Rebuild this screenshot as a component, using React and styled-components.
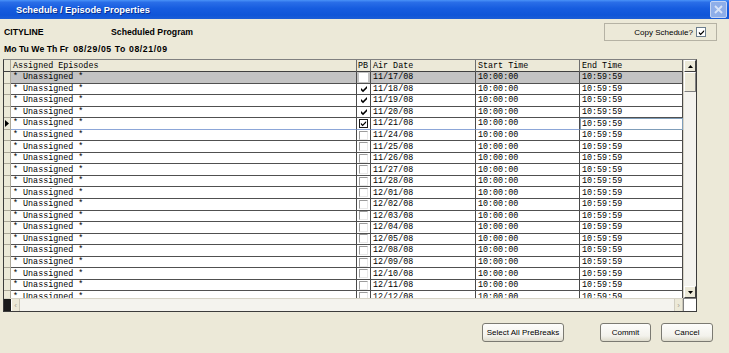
import React from 'react';
import styled, { createGlobalStyle, css } from 'styled-components';

const GlobalStyle = createGlobalStyle`
  html, body {
    margin: 0;
    padding: 0;
    background: #ece9d8;
  }
  body {
    font-family: "Liberation Sans", Arial, sans-serif;
  }
`;

const ROW_H = 11.56;

const Window = styled.div`
  width: 729px;
  height: 353px;
  background: #ece9d8;
  display: flex;
  flex-direction: column;
  overflow: hidden;
`;

const TitleBar = styled.div`
  height: 19px;
  display: flex;
  align-items: center;
  justify-content: space-between;
  padding: 0 2px 0 16px;
  background: linear-gradient(#4a93f8 0%, #2a6ee8 12%, #165cdf 45%, #0f55d8 80%, #1c5ed6 100%);
`;

const Title = styled.span`
  color: #fff;
  font-family: "Liberation Sans", Arial, sans-serif;
  font-weight: bold;
  font-size: 9.3px;
  text-shadow: 1px 1px 0 #0a2f8c;
`;

const CloseButton = styled.div`
  width: 15px;
  height: 15px;
  border-radius: 2px;
  border: 1px solid #c4d4f4;
  background: #8eaee9;
  display: flex;
  align-items: center;
  justify-content: center;
`;

const Body = styled.div`
  flex: 1;
  display: flex;
  flex-direction: column;
  padding: 4px 0 0 3px;
`;

const InfoGrid = styled.div`
  display: grid;
  grid-template-columns: 107px 1fr auto;
  grid-template-rows: 18px 15px;
  align-items: center;
  padding-left: 1px;
  padding-right: 12px;
`;

const Label = styled.div`
  font-family: "Liberation Sans", Arial, sans-serif;
  font-weight: bold;
  font-size: 8.7px;
  color: #000;
  white-space: pre;
  ${p => p.$span && css`grid-column: 1 / span 3;`}
`;

const Range = styled.span`
  letter-spacing: 0.6px;
`;

const CopyButton = styled.div`
  width: 101px;
  height: 16px;
  border: 1px solid #b5b2a4;
  display: flex;
  align-items: center;
  justify-content: flex-end;
  gap: 3px;
  padding-right: 10px;
  box-sizing: content-box;
  font-size: 8px;
  color: #000;
`;

const SmallCheck = styled.span`
  width: 8px;
  height: 8px;
  border: 1px solid #6b7d8c;
  background: #fff;
  display: inline-flex;
  align-items: center;
  justify-content: center;
`;

const Frame = styled.div`
  margin-top: 3px;
  width: 692px;
  height: 251px;
  border: 1px solid #3c3c3c;
  border-top-color: #808080;
  display: grid;
  grid-template-columns: 679px 13px;
  grid-template-rows: 238px 13px;
  background: #ffffff;
`;

const DataArea = styled.div`
  overflow: hidden;
  font-family: "Liberation Mono", "Courier New", monospace;
  font-size: 8.4px;
  color: #000;
`;

const COLS = '7px 346px 14px 105px 104px 103px';

const HeaderRow = styled.div`
  display: grid;
  grid-template-columns: ${COLS};
  height: 12px;
  background: #ece9d8;
`;

const HeaderCell = styled.div`
  border-right: 1px solid ${p => (p.$gutter ? '#aca899' : '#6e6e6e')};
  border-bottom: 1px solid #404040;
  padding-left: ${p => (p.$tight ? 1 : 2)}px;
  display: flex;
  align-items: center;
  overflow: hidden;
  white-space: pre;
`;

const Row = styled.div`
  display: grid;
  grid-template-columns: ${COLS};
  height: ${ROW_H}px;
  background: ${p => (p.$selected ? '#c3c3c3' : '#fff')};
`;

const Cell = styled.div`
  border-right: 1px solid #4a4a4a;
  border-bottom: 1px solid ${p => (p.$current ? '#8ca6d8' : '#505050')};
  padding-left: 2px;
  display: flex;
  align-items: center;
  overflow: hidden;
  white-space: pre;
  box-sizing: border-box;
  ${p => p.$focus && css`
    border: 1px solid #7f9db9;
    padding-left: 1px;
  `}
`;

const Gutter = styled.div`
  background: #ece9d8;
  border-right: 1px solid #aca899;
  border-bottom: 1px solid #aca899;
  display: flex;
  align-items: center;
  justify-content: flex-start;
  padding-left: 1px;
`;

const PBCell = styled(Cell)`
  justify-content: center;
  padding: 0;
`;

const Box = styled.span`
  width: 9px;
  height: 9px;
  box-sizing: border-box;
  display: inline-flex;
  align-items: center;
  justify-content: center;
  background: #fff;
  ${p => p.$variant === 'plain' && css`
    border-top: 1px solid #9c9c9c;
    border-left: 1px solid #9c9c9c;
    border-right: 1px solid #e8e8e8;
    border-bottom: 1px solid #e8e8e8;
  `}
  ${p => p.$variant === 'focus' && css`
    border: 1px solid #1a1a1a;
  `}
`;

const VScroll = styled.div`
  background: #f4f3ee;
  border-left: 1px solid #d6d3c6;
  display: flex;
  flex-direction: column;
  justify-content: space-between;
`;

const ArrowButton = styled.div`
  width: 12px;
  height: 12px;
  box-sizing: border-box;
  background: #ece9d8;
  border-top: 1px solid #fff;
  border-left: 1px solid #fff;
  border-right: 1px solid #404040;
  border-bottom: 1px solid #404040;
  display: flex;
  align-items: center;
  justify-content: center;
`;

const Thumb = styled.div`
  width: 12px;
  height: 20px;
  box-sizing: border-box;
  background: #ece9d8;
  border-top: 1px solid #fff;
  border-left: 1px solid #fff;
  border-right: 1px solid #808080;
  border-bottom: 1px solid #808080;
`;

const Track = styled.div`
  flex: 1;
`;

const HScroll = styled.div`
  display: flex;
  align-items: stretch;
  background: #f4f3ee;
  border-top: 1px solid #d6d3c6;
`;

const HScrollCap = styled.div`
  width: 7px;
  background: #1a1a1a;
`;

const HArrow = styled.div`
  width: 9px;
  box-sizing: border-box;
  background: #ece9d8;
  border-right: 1px solid #c9c6b8;
  border-left: 1px solid #fff;
  display: flex;
  align-items: center;
  justify-content: center;
  color: #a5a294;
  font-size: 8px;
  ${p => p.$right && css`
    margin-left: auto;
    border-left: 1px solid #d0cdc0;
  `}
`;

const Corner = styled.div`
  background: #fff;
  border-left: 1px solid #808080;
  border-top: 1px solid #808080;
`;

const Footer = styled.div`
  display: flex;
  align-items: center;
  padding: 11px 16px 0 0;
`;

const Button = styled.button`
  height: 19px;
  width: ${p => p.$width}px;
  margin-left: ${p => p.$gap}px;
  border: 1px solid #7b7a72;
  border-radius: 3px;
  background: linear-gradient(#fdfdfb 0%, #f3f2ec 70%, #dedbcc 100%);
  font-family: "Liberation Sans", Arial, sans-serif;
  font-size: 8px;
  color: #000;
  padding: 0;
  &:first-child {
    margin-left: auto;
  }
`;

const Check = ({ size = 8 }) => (
  <svg width={size} height={size} viewBox="0 0 8 8">
    <path d="M1 3 L3 5 L7 1 L7 3.2 L3 7.2 L1 5.2 Z" fill="#000" />
  </svg>
);

const dates = [
  '11/17/08', '11/18/08', '11/19/08', '11/20/08', '11/21/08', '11/24/08',
  '11/25/08', '11/26/08', '11/27/08', '11/28/08', '12/01/08', '12/02/08',
  '12/03/08', '12/04/08', '12/05/08', '12/08/08', '12/09/08', '12/10/08',
  '12/11/08', '12/12/08',
];

const PB = ({ index }) => {
  if (index === 0) return <Box />;
  if (index === 4) return <Box $variant="focus"><Check size={7} /></Box>;
  if (index < 4) return <Box><Check size={8} /></Box>;
  return <Box $variant="plain" />;
};

const App = () => {
  return (
    <Window>
      <GlobalStyle />
      <TitleBar>
        <Title>Schedule / Episode Properties</Title>
        <CloseButton>
          <svg width="9" height="9" viewBox="0 0 9 9">
            <path d="M1 1 L8 8 M8 1 L1 8" stroke="#d7e3f8" strokeWidth="1.8" />
          </svg>
        </CloseButton>
      </TitleBar>
      <Body>
        <InfoGrid>
          <Label>CITYLINE</Label>
          <Label>Scheduled Program</Label>
          <CopyButton>
            Copy Schedule?
            <SmallCheck><Check size={7} /></SmallCheck>
          </CopyButton>
          <Label $span>
            {'Mo Tu We Th Fr  '}
            <Range>08/29/05 To 08/21/09</Range>
          </Label>
        </InfoGrid>

        <Frame>
          <DataArea>
            <HeaderRow>
              <HeaderCell $gutter />
              <HeaderCell>Assigned Episodes</HeaderCell>
              <HeaderCell $tight>PB</HeaderCell>
              <HeaderCell>Air Date</HeaderCell>
              <HeaderCell>Start Time</HeaderCell>
              <HeaderCell>End Time</HeaderCell>
            </HeaderRow>
            {dates.map((date, i) => {
              const current = i === 4;
              return (
                <Row key={date} $selected={i === 0}>
                  <Gutter>
                    {current && (
                      <svg width="4" height="7" viewBox="0 0 4 7">
                        <path d="M0 0 L4 3.5 L0 7 Z" fill="#000" />
                      </svg>
                    )}
                  </Gutter>
                  <Cell $current={current}>* Unassigned *</Cell>
                  <PBCell $current={current}><PB index={i} /></PBCell>
                  <Cell $current={current}>{date}</Cell>
                  <Cell $current={current}>10:00:00</Cell>
                  <Cell $current={current} $focus={current}>10:59:59</Cell>
                </Row>
              );
            })}
          </DataArea>
          <VScroll>
            <div>
              <ArrowButton>
                <svg width="5" height="3" viewBox="0 0 5 3">
                  <path d="M0 3 L2.5 0 L5 3 Z" fill="#000" />
                </svg>
              </ArrowButton>
              <Thumb />
            </div>
            <Track />
            <ArrowButton>
              <svg width="5" height="3" viewBox="0 0 5 3">
                <path d="M0 0 L2.5 3 L5 0 Z" fill="#000" />
              </svg>
            </ArrowButton>
          </VScroll>
          <HScroll>
            <HScrollCap />
            <HArrow>‹</HArrow>
            <HArrow $right>›</HArrow>
          </HScroll>
          <Corner />
        </Frame>

        <Footer>
          <Button $width={82}>Select All PreBreaks</Button>
          <Button $width={51} $gap={36}>Commit</Button>
          <Button $width={52} $gap={10}>Cancel</Button>
        </Footer>
      </Body>
    </Window>
  );
};

export default App;
